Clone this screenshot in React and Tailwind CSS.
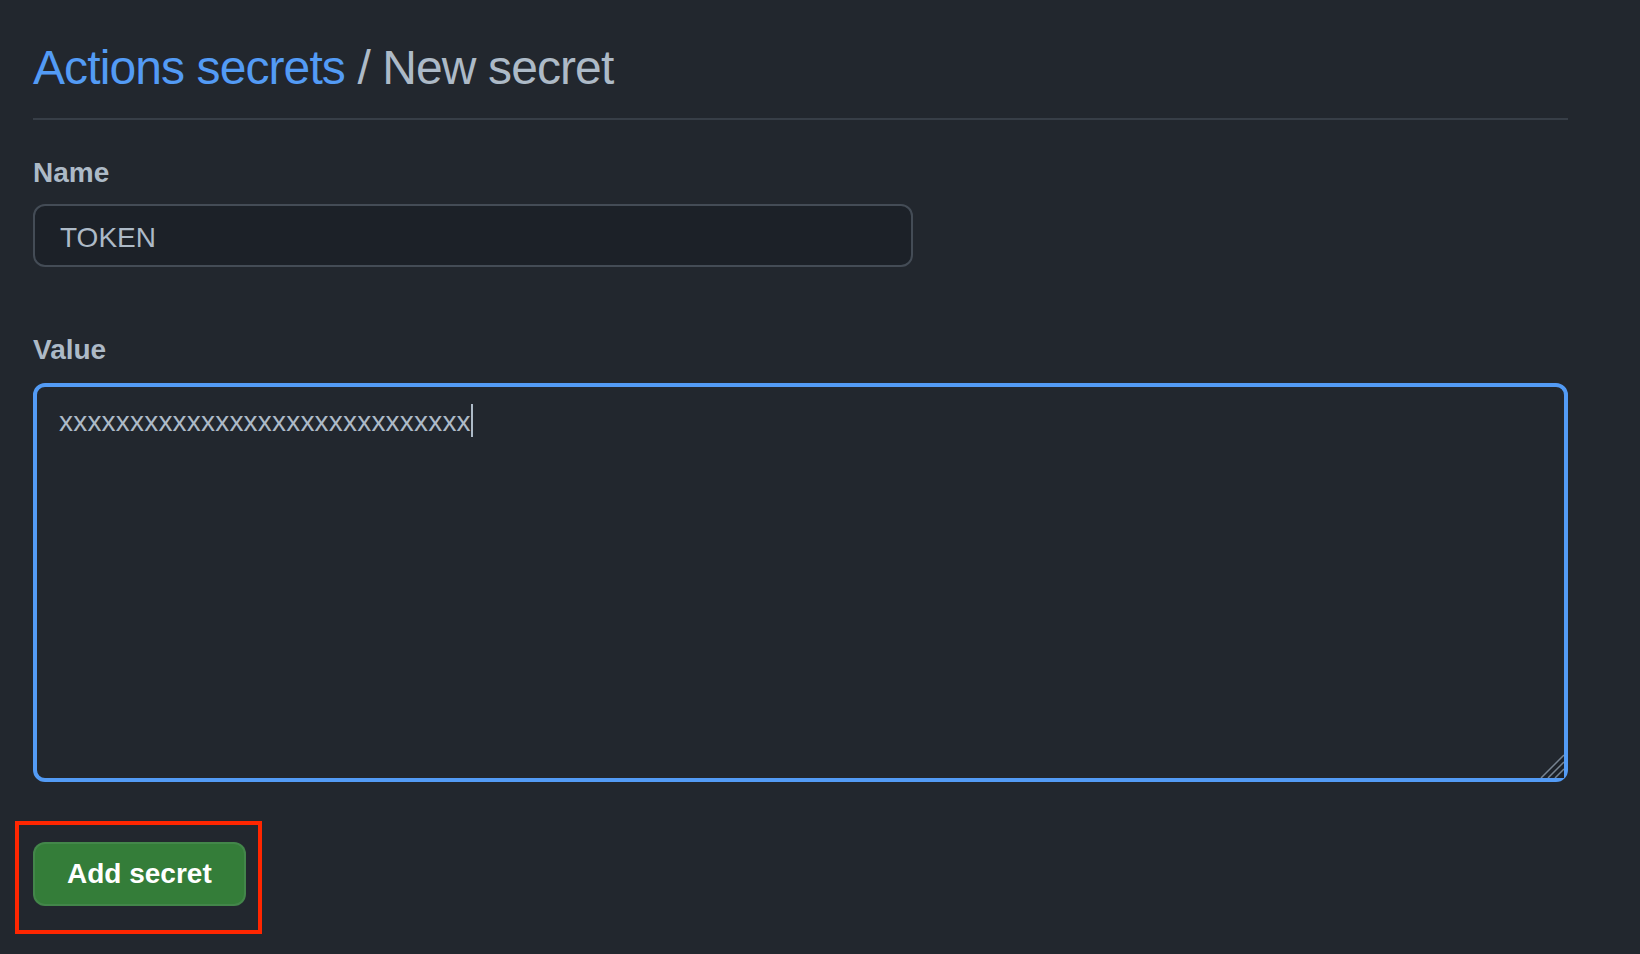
export default function App() {
  const value = "xxxxxxxxxxxxxxxxxxxxxxxxxxxxx";

  return (
    <div className="min-h-[954px] w-full bg-[#22272e] text-[#adbac7]" style={{ fontFamily: "'Liberation Sans', Arial, sans-serif" }}>
      <div className="w-[1568px] pl-[33px]">
        {/* header */}
        <div className="border-b-2 border-[#373e47] pt-[32px] pb-[14px]">
          <h1 className="text-[48px] leading-[72px] font-normal tracking-[-0.9px]">
            <a href="#" className="text-[#539bf5]">Actions secrets</a>
            <span className="text-[#adbac7]"> / New secret</span>
          </h1>
        </div>

        {/* name */}
        <div className="mt-8">
          <label className="block text-[28px] leading-[42px] font-bold mb-[10px]">Name</label>
          <div className="w-[880px] h-[63px] rounded-[12px] border-2 border-[#444c56] bg-[#1c2128] pl-[25px] pt-[11px] pb-[6px] text-[28px] leading-[42px]">
            TOKEN
          </div>
        </div>

        {/* value */}
        <div className="mt-[62px]">
          <label className="block text-[28px] leading-[42px] font-bold mb-3">Value</label>
          <div className="relative h-[399px] w-[1535px] rounded-[12px] border-4 border-[#539bf5] bg-[#22272e] pl-[22px] pt-[14px] text-[28px] leading-[42px]">
            <span className="tracking-[0.2px]">{value}</span>
            <span className="inline-block w-[2px] h-[33px] bg-[#adbac7] align-[-6px]"></span>
            <svg className="absolute right-0 bottom-0" width="24" height="24" viewBox="0 0 24 24">
              <path d="M0 24 L24 0 L24 24 Z" fill="#1c2128" />
              <path d="M1 24 L24 1 M8 24 L24 8 M15 24 L24 15" stroke="#768390" strokeWidth="1.5" />
            </svg>
          </div>
        </div>

        {/* submit */}
        <div className="mt-[39px] -ml-[18px] inline-flex border-4 border-[#ff2600] pl-[14px] pt-[17px] pb-[24px] pr-[12px]">
          <button className="rounded-[12px] border-2 border-[rgba(205,217,229,0.1)] bg-[#347d39] px-[32px] py-[9px] text-[28px] leading-[42px] font-bold text-white">
            Add secret
          </button>
        </div>
      </div>
    </div>
  );
}
